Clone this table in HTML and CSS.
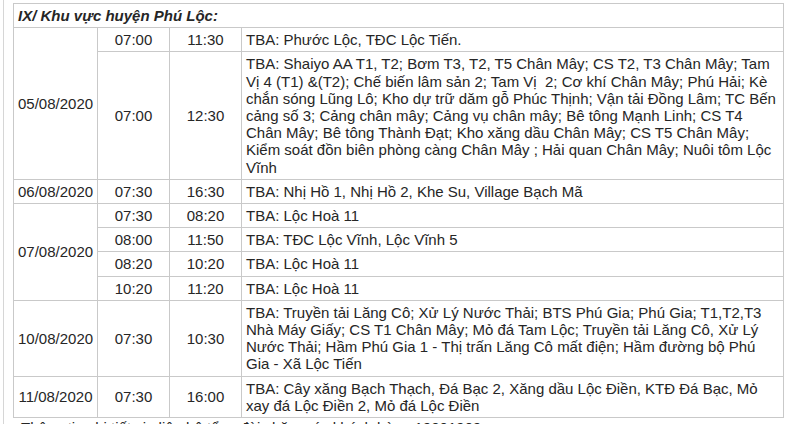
FILE: index.html
```html
<!DOCTYPE html>
<html lang="vi">
<head>
<meta charset="utf-8">
<link rel="stylesheet" href="styles.css">
</head>
<body>
<div class="page">
  <table class="schedule">
    <colgroup>
      <col class="c-date">
      <col class="c-time">
      <col class="c-time">
      <col class="c-desc">
    </colgroup>
    <tbody>
      <tr><td class="section" colspan="4">IX/ Khu vực huyện Phú Lộc:</td></tr>
      <tr>
        <td class="center" rowspan="2">05/08/2020</td>
        <td class="center">07:00</td><td class="center">11:30</td>
        <td>TBA: Phước Lộc, TĐC Lộc Tiến.</td>
      </tr>
      <tr>
        <td class="center">07:00</td><td class="center">12:30</td>
        <td>TBA: Shaiyo AA T1, T2; Bơm T3, T2, T5 Chân Mây; CS T2, T3 Chân Mây; Tam Vị 4 (T1) &amp;(T2); Chế biến lâm sản 2; Tam Vị&nbsp; 2; Cơ khí Chân Mây; Phú Hải; Kè chắn sóng Lũng Lô; Kho dự trữ dăm gỗ Phúc Thịnh; Vận tải Đồng Lâm; TC Bến cảng số 3; Cảng chân mây; Cảng vụ chân mây; Bê tông Mạnh Linh; CS T4 Chân Mây; Bê tông Thành Đạt; Kho xăng dầu Chân Mây; CS T5 Chân Mây; Kiểm soát đồn biên phòng càng Chân Mây ; Hải quan Chân Mây; Nuôi tôm Lộc Vĩnh</td>
      </tr>
      <tr>
        <td class="center">06/08/2020</td>
        <td class="center">07:30</td><td class="center">16:30</td>
        <td>TBA: Nhị Hồ 1, Nhị Hồ 2, Khe Su, Village Bạch Mã</td>
      </tr>
      <tr>
        <td class="center" rowspan="4">07/08/2020</td>
        <td class="center">07:30</td><td class="center">08:20</td>
        <td>TBA: Lộc Hoà 11</td>
      </tr>
      <tr>
        <td class="center">08:00</td><td class="center">11:50</td>
        <td>TBA: TĐC Lộc Vĩnh, Lộc Vĩnh 5</td>
      </tr>
      <tr>
        <td class="center">08:20</td><td class="center">10:20</td>
        <td>TBA: Lộc Hoà 11</td>
      </tr>
      <tr>
        <td class="center">10:20</td><td class="center">11:20</td>
        <td>TBA: Lộc Hoà 11</td>
      </tr>
      <tr>
        <td class="center">10/08/2020</td>
        <td class="center">07:30</td><td class="center">10:30</td>
        <td>TBA: Truyền tải Lăng Cô; Xử Lý Nước Thải; BTS Phú Gia; Phú Gia; T1,T2,T3 Nhà Máy Giấy; CS T1 Chân Mây; Mỏ đá Tam Lộc; Truyền tải Lăng Cô, Xử Lý Nước Thải; Hầm Phú Gia 1 - Thị trấn Lăng Cô mất điện; Hầm đường bộ Phú Gia - Xã Lộc Tiến</td>
      </tr>
      <tr>
        <td class="center">11/08/2020</td>
        <td class="center">07:30</td><td class="center">16:00</td>
        <td>TBA: Cây xăng Bạch Thạch, Đá Bạc 2, Xăng dầu Lộc Điền, KTĐ Đá Bạc, Mỏ xay đá Lộc Điền 2, Mỏ đá Lộc Điền</td>
      </tr>
    </tbody>
  </table>
  <p class="note">Thông tin chi tiết xin liên hệ tổng đài chăm sóc khách hàng 19001909</p>
</div>
</body>
</html>
```

FILE: styles.css
```css
html, body {
  margin: 0;
  padding: 0;
  background: #ffffff;
}
body {
  font-family: "Liberation Sans", Arial, sans-serif;
  font-size: 15px;
  color: #262626;
  overflow: hidden;
  height: 424px;
}
.page {
  margin-left: 3px;
  border-left: 1px solid #d6d6d6;
  padding: 3px 0 0 9px;
  min-height: 424px;
  box-sizing: border-box;
}
.schedule {
  border-collapse: collapse;
  table-layout: fixed;
  width: 770px;
}
.c-date { width: 84px; }
.c-time { width: 72px; }
.c-desc { width: 542px; }
.schedule td {
  border: 1px solid #c9c9c9;
  padding: 3px 4px;
  vertical-align: middle;
  text-align: left;
  line-height: 17.2px;
}
.schedule td.center {
  text-align: center;
}
.schedule td.section {
  font-weight: bold;
  font-style: italic;
  padding-left: 4px;
}
.note {
  margin: 1px 0 0 8px;
  line-height: 17px;
}
```
